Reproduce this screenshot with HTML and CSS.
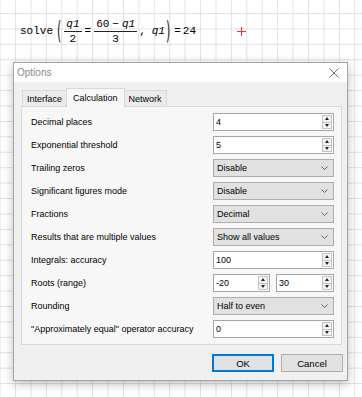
FILE: index.html
```html
<!DOCTYPE html>
<html lang="en">
<head>
    <meta charset="UTF-8">
    <meta name="viewport" content="width=device-width, initial-scale=1.0">
    <title>Options</title>
    <link rel="stylesheet" href="styles.css">
</head>
<body>
    <div class="sheet">
        <div class="formula">
            <span class="fn">solve</span>
            <span class="paren">(</span>
            <span class="frac"><span class="num"><i>q1</i></span><span class="den">2</span></span>
            <span class="op">=</span>
            <span class="frac"><span class="num">60<span class="minus">&minus;</span><i>q1</i></span><span class="den">3</span></span>
            <span class="sep">,</span>
            <i class="arg">q1</i>
            <span class="paren">)</span>
            <span class="op">=</span>
            <span class="res">24</span>
        </div>
        <div class="cursor"></div>
    </div>

    <div class="window">
        <div class="titlebar">
            <span class="title">Options</span>
            <svg class="close" width="10" height="10" viewBox="0 0 10 10">
                <path d="M0.5 0.5 L9.5 9.5 M9.5 0.5 L0.5 9.5" stroke="#707070" stroke-width="1" fill="none"/>
            </svg>
        </div>
        <div class="dialog-body">
            <div class="tabs">
                <div class="tab">Interface</div>
                <div class="tab active">Calculation</div>
                <div class="tab">Network</div>
            </div>
            <div class="panel">
                <div class="settings">
                    <label>Decimal places</label>
                    <div class="field"><span class="value">4</span><span class="spin"><span class="up"></span><span class="down"></span></span></div>

                    <label>Exponential threshold</label>
                    <div class="field"><span class="value">5</span><span class="spin"><span class="up"></span><span class="down"></span></span></div>

                    <label>Trailing zeros</label>
                    <div class="select"><span class="value">Disable</span><svg class="chev" width="7" height="4" viewBox="0 0 7 4"><path d="M0.5 0.5 L3.5 3.5 L6.5 0.5" stroke="#606060" fill="none"/></svg></div>

                    <label>Significant figures mode</label>
                    <div class="select"><span class="value">Disable</span><svg class="chev" width="7" height="4" viewBox="0 0 7 4"><path d="M0.5 0.5 L3.5 3.5 L6.5 0.5" stroke="#606060" fill="none"/></svg></div>

                    <label>Fractions</label>
                    <div class="select"><span class="value">Decimal</span><svg class="chev" width="7" height="4" viewBox="0 0 7 4"><path d="M0.5 0.5 L3.5 3.5 L6.5 0.5" stroke="#606060" fill="none"/></svg></div>

                    <label>Results that are multiple values</label>
                    <div class="select"><span class="value">Show all values</span><svg class="chev" width="7" height="4" viewBox="0 0 7 4"><path d="M0.5 0.5 L3.5 3.5 L6.5 0.5" stroke="#606060" fill="none"/></svg></div>

                    <label>Integrals: accuracy</label>
                    <div class="field"><span class="value">100</span><span class="spin"><span class="up"></span><span class="down"></span></span></div>

                    <label>Roots (range)</label>
                    <div class="pair">
                        <div class="field"><span class="value">-20</span><span class="spin"><span class="up"></span><span class="down"></span></span></div>
                        <div class="field"><span class="value">30</span><span class="spin"><span class="up"></span><span class="down"></span></span></div>
                    </div>

                    <label>Rounding</label>
                    <div class="select"><span class="value">Half to even</span><svg class="chev" width="7" height="4" viewBox="0 0 7 4"><path d="M0.5 0.5 L3.5 3.5 L6.5 0.5" stroke="#606060" fill="none"/></svg></div>

                    <label>"Approximately equal" operator accuracy</label>
                    <div class="field"><span class="value">0</span><span class="spin"><span class="up"></span><span class="down"></span></span></div>
                </div>
            </div>
            <div class="buttons">
                <button type="button" class="btn default">OK</button>
                <button type="button" class="btn">Cancel</button>
            </div>
        </div>
    </div>
</body>
</html>
```

FILE: styles.css
```css
body {
    margin: 0;
    width: 362px;
    height: 397px;
    overflow: hidden;
    position: relative;
    background-color: #fff;
    background-image:
        linear-gradient(to right, #e1e1e1 1px, transparent 1px),
        linear-gradient(to bottom, #e1e1e1 1px, transparent 1px);
    background-size: 15.43px 15.43px;
    background-position: 15px 13px;
    font-family: "Liberation Sans", Arial, sans-serif;
}

/* worksheet */
.formula {
    position: absolute;
    left: 20px;
    top: 18px;
    height: 26px;
    display: flex;
    align-items: center;
    font-family: "Liberation Mono", "Courier New", monospace;
    font-size: 11px;
    color: #000;
}
.formula i {
    font-style: italic;
}
.fn {
    margin-right: 3px;
}
.paren {
    display: inline-block;
    font-family: "DejaVu Sans", sans-serif;
    font-size: 11px;
    transform: scale(1, 2.2);
    margin: 0 2px 0 1px;
    color: #222;
}
.frac {
    display: inline-flex;
    flex-direction: column;
    align-items: center;
    line-height: 12px;
    margin: 0 1px;
}
.frac .num {
    padding: 0 2px 1px;
    border-bottom: 1px solid #222;
}
.frac .den {
    padding-top: 1px;
}
.minus {
    margin: 0 3px;
}
.op {
    margin: 0 2px;
}
.sep {
    margin: 0 6px 0 1px;
}
.cursor {
    position: absolute;
    left: 237px;
    top: 27px;
    width: 9px;
    height: 9px;
}
.cursor::before, .cursor::after {
    content: "";
    position: absolute;
    background: #f03030;
}
.cursor::before {
    left: 4px;
    top: 0;
    width: 1px;
    height: 9px;
}
.cursor::after {
    left: 0;
    top: 4px;
    width: 9px;
    height: 1px;
}

/* dialog window */
.window {
    position: absolute;
    left: 13px;
    top: 62px;
    width: 335px;
    height: 319px;
    box-sizing: border-box;
    border: 1px solid #a3a3a3;
    background: #f0f0f0;
    box-shadow: 0 3px 10px rgba(0, 0, 0, 0.25);
    display: flex;
    flex-direction: column;
    font-size: 9px;
    color: #000;
}
.titlebar {
    height: 21px;
    background: #fff;
    display: flex;
    align-items: center;
    justify-content: space-between;
    padding: 0 8px 0 3px;
}
.title {
    font-size: 10px;
    color: #8a8a8a;
}
.dialog-body {
    flex: 1;
    padding: 6px 5px 8px 7px;
    display: flex;
    flex-direction: column;
}
.tabs {
    display: flex;
    align-items: flex-end;
    height: 18px;
    padding-left: 1px;
}
.tab {
    height: 16px;
    box-sizing: border-box;
    border: 1px solid #d9d9d9;
    border-bottom: none;
    background: #ebebeb;
    display: flex;
    align-items: center;
    padding: 0 4px;
    margin-right: -1px;
}
.tab.active {
    height: 19px;
    margin-bottom: -1px;
    background: #f7f7f7;
    padding: 0 6px;
    position: relative;
    z-index: 1;
}
.panel {
    height: 239px;
    box-sizing: border-box;
    border: 1px solid #d9d9d9;
    background: #f7f7f7;
    padding: 6px 7px 6px 9px;
}
.settings {
    display: grid;
    grid-template-columns: 1fr 121px;
    grid-auto-rows: 18px;
    row-gap: 5px;
    align-items: center;
}
.field, .select {
    height: 18px;
    box-sizing: border-box;
    display: flex;
    align-items: center;
}
.field {
    border: 1px solid #a6a6a6;
    background: #fff;
    padding: 1px;
}
.field .value {
    flex: 1;
    padding-left: 1px;
}
.spin {
    width: 10px;
    height: 14px;
    box-sizing: border-box;
    border: 1px solid #c4c4c4;
    background: #f4f4f4;
    display: flex;
    flex-direction: column;
}
.spin span {
    flex: 1;
    display: flex;
    align-items: center;
    justify-content: center;
}
.spin .up {
    border-bottom: 1px solid #c4c4c4;
}
.spin .up::before, .spin .down::before {
    content: "";
    width: 0;
    height: 0;
    border-left: 2.5px solid transparent;
    border-right: 2.5px solid transparent;
}
.spin .up::before {
    border-bottom: 3px solid #222;
}
.spin .down::before {
    border-top: 3px solid #222;
}
.select {
    border: 1px solid #adadad;
    background: #e1e1e1;
    justify-content: space-between;
    padding: 0 5px 0 3px;
}
.pair {
    display: grid;
    grid-template-columns: 57px 58px;
    column-gap: 6px;
}
.buttons {
    display: flex;
    justify-content: flex-end;
    gap: 7px;
    margin-top: 9px;
    margin-right: -1px;
}
.btn {
    width: 62px;
    height: 18px;
    box-sizing: border-box;
    border: 1px solid #adadad;
    background: #e1e1e1;
    font-family: "Liberation Sans", Arial, sans-serif;
    font-size: 9.5px;
    color: #000;
    padding: 0;
}
.btn.default {
    border: 2px solid #0078d7;
}
```
